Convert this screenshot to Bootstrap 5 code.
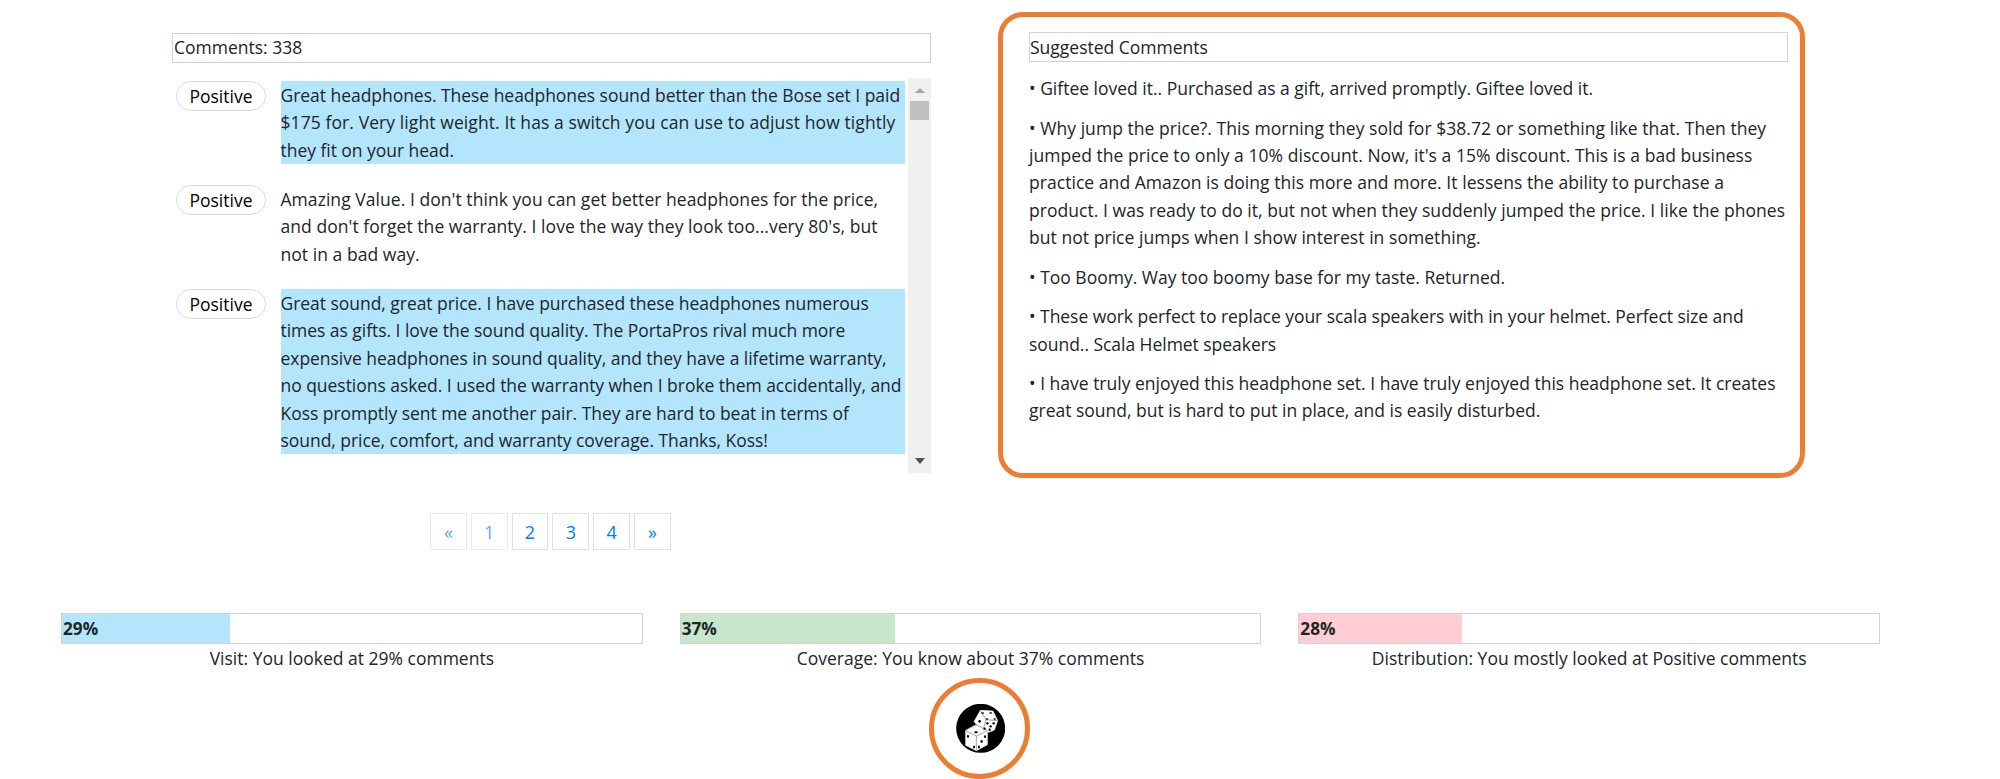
<!DOCTYPE html>
<html lang="en">
<head>
<meta charset="utf-8">
<meta name="viewport" content="width=device-width, initial-scale=1">
<title>Comments</title>
<link href="https://cdn.jsdelivr.net/npm/bootstrap@5.3.0/dist/css/bootstrap.min.css" rel="stylesheet">
<style>
body{font-family:"Segoe UI","Open Sans",sans-serif;font-size:17.5px;line-height:27.4px;color:#212529;background:#fff;overflow:hidden;white-space:nowrap}
.top-area{height:478px;padding:12px 195px 0 172px}
.left-col{width:759px;padding-top:21px}
.right-col{width:807px;height:466px;border:5px solid #ed7d31;border-radius:25px;padding:15px 12px 0 26px}
.title-box{height:30px;border:1px solid #d3d3d3;padding-left:1px;line-height:27px}
.right-col .title-box{padding-left:0;margin-bottom:13px;line-height:28px}
.feed{height:395px;margin-top:15px}
.feed-list{width:733px;padding:3px 0 0 4px}
.entry{margin-bottom:20.8px}
.tag{width:90px;height:30px;border:1px solid #d9d9d9;border-radius:15px;color:#000;line-height:29px;padding:0;margin-right:14.5px;text-align:center}
.entry-text{width:624px;padding-top:1px}
.ls-tight{letter-spacing:-.04px}
.ls-wide{letter-spacing:.05px}
.ls-wider{letter-spacing:.09px}
.seen{background:#b3e5fc}
.scroll-track{width:23px;background:#f0f0f0;padding:10px 0 9px}
.scroll-thumb{width:19px;height:19px;background:#c0c0c0;margin-top:8px}
.suggest p{margin-bottom:12.1px}
.pager{margin:35px 0 0 430px;gap:4px;height:37px}
.pager .page-item .page-link{width:36.8px;height:37px;border:1px solid #dee2e6;border-radius:0;margin-left:0;color:#007bff;padding:0;line-height:37px;font-size:18px;text-align:center}
.pager .page-item.disabled .page-link{opacity:.65;background:#fff}
.meters{margin:63px 120px 0 61px;gap:37px}
.meter{height:31px;border:1px solid #d3d3d3;margin-bottom:1px}
.meter-fill{height:29px;line-height:29px;font-weight:700;font-size:17.2px;padding-left:1px}
.visit{background:#b3e5fc}.coverage{background:#c8e6c9}.distribution{background:#ffcdd2}
.dice-ring{width:101px;height:101px;border:5px solid #ed7d31;margin:5.6px 0 0 929px}
</style>
</head>
<body>
<div class="top-area d-flex justify-content-between">
  <section class="left-col">
    <div class="title-box">Comments: 338</div>
    <div class="feed d-flex justify-content-between">
      <div class="feed-list">
        <div class="entry d-flex"><span class="tag">Positive</span><div class="entry-text seen ls-tight">Great headphones. These headphones sound better than the Bose set I paid<br><span class="ls-wider">$175 for. Very light weight. It has a switch you can use to adjust how tightly</span><br>they fit on your head.</div></div>
        <div class="entry d-flex"><span class="tag">Positive</span><div class="entry-text ls-wide">Amazing Value. I don't think you can get better headphones for the price,<br>and don't forget the warranty. I love the way they look too...very 80's, but<br>not in a bad way.</div></div>
        <div class="entry d-flex"><span class="tag">Positive</span><div class="entry-text seen ls-tight">Great sound, great price. I have purchased these headphones numerous<br>times as gifts. I love the sound quality. The PortaPros rival much more<br>expensive headphones in sound quality, and they have a lifetime warranty,<br>no questions asked. I used the warranty when I broke them accidentally, and<br>Koss promptly sent me another pair. They are hard to beat in terms of<br>sound, price, comfort, and warranty coverage. Thanks, Koss!</div></div>
      </div>
      <div class="scroll-track d-flex flex-column align-items-center">
        <svg width="10" height="5"><path d="M0 5 5 0l5 5z" fill="#a3a3a3"/></svg>
        <div class="scroll-thumb"></div>
        <svg class="mt-auto" width="10" height="6"><path d="M0 0h10L5 6z" fill="#505050"/></svg>
      </div>
    </div>
  </section>
  <section class="right-col suggest">
    <div class="title-box">Suggested Comments</div>
    <p>• Giftee loved it.. Purchased as a gift, arrived promptly. Giftee loved it.</p>
    <p class="ls-wide">• Why jump the price?. This morning they sold for $38.72 or something like that. Then they<br>jumped the price to only a 10% discount. Now, it's a 15% discount. This is a bad business<br>practice and Amazon is doing this more and more. It lessens the ability to purchase a<br>product. I was ready to do it, but not when they suddenly jumped the price. I like the phones<br>but not price jumps when I show interest in something.</p>
    <p>• Too Boomy. Way too boomy base for my taste. Returned.</p>
    <p class="ls-tight">• These work perfect to replace your scala speakers with in your helmet. Perfect size and<br>sound.. Scala Helmet speakers</p>
    <p>• I have truly enjoyed this headphone set. I have truly enjoyed this headphone set. It creates<br>great sound, but is hard to put in place, and is easily disturbed.</p>
  </section>
</div>
<ul class="pager pagination">
  <li class="page-item disabled"><a class="page-link">«</a></li>
  <li class="page-item disabled"><a class="page-link">1</a></li>
  <li class="page-item"><a class="page-link" href="#">2</a></li>
  <li class="page-item"><a class="page-link" href="#">3</a></li>
  <li class="page-item"><a class="page-link" href="#">4</a></li>
  <li class="page-item"><a class="page-link" href="#">»</a></li>
</ul>
<div class="meters d-flex text-center">
  <div class="flex-fill w-100"><div class="meter text-start"><div class="meter-fill visit" style="width:29%">29%</div></div>Visit: You looked at 29% comments</div>
  <div class="flex-fill w-100"><div class="meter text-start"><div class="meter-fill coverage" style="width:37%">37%</div></div>Coverage: You know about 37% comments</div>
  <div class="flex-fill w-100"><div class="meter text-start"><div class="meter-fill distribution" style="width:28%">28%</div></div>Distribution: You mostly looked at Positive comments</div>
</div>
<div class="dice-ring rounded-circle d-flex align-items-center justify-content-center">
  <svg width="50" height="50" viewBox="104 101 150 150">
    <circle cx="181" cy="174" r="73.5"/>
    <g fill="#fff" stroke="#fff" stroke-width="2" stroke-linejoin="round">
      <path d="M180 120l38 2 14 29-10 28-17 7-17-5-27-27z"/>
      <path d="M167 163l34 18v42l-33 18-32-16v-45z"/>
    </g>
    <g fill="none" stroke="#777" stroke-width="2">
      <path d="M180 121l17 27 34 3M197 148l-9 32M136 181l32 16 32-15M168 197v43M136 180l31-17 34 18"/>
    </g>
    <g>
      <ellipse cx="187" cy="128" rx="4.5" ry="2.5"/><ellipse cx="211" cy="128" rx="4.5" ry="2.5"/><ellipse cx="200" cy="146" rx="4" ry="2.5"/><ellipse cx="223" cy="146" rx="4" ry="2.5"/>
      <circle cx="178" cy="153" r="4"/>
      <circle cx="201" cy="159" r="3.6"/><circle cx="220" cy="159" r="3.6"/><circle cx="211" cy="168" r="3.6"/><circle cx="193" cy="175" r="3.2"/><circle cx="208" cy="178" r="3.6"/>
      <ellipse cx="167" cy="186" rx="5.5" ry="3"/>
      <ellipse cx="143" cy="198" rx="3" ry="4.5"/><ellipse cx="161" cy="230" rx="3" ry="4.5"/>
      <ellipse cx="194" cy="199" rx="3" ry="4"/><ellipse cx="184" cy="213" rx="3.2" ry="5"/><ellipse cx="176" cy="230" rx="3" ry="4.5"/>
    </g>
  </svg>
</div>
<script src="https://cdn.jsdelivr.net/npm/bootstrap@5.3.0/dist/js/bootstrap.bundle.min.js"></script>
</body>
</html>
